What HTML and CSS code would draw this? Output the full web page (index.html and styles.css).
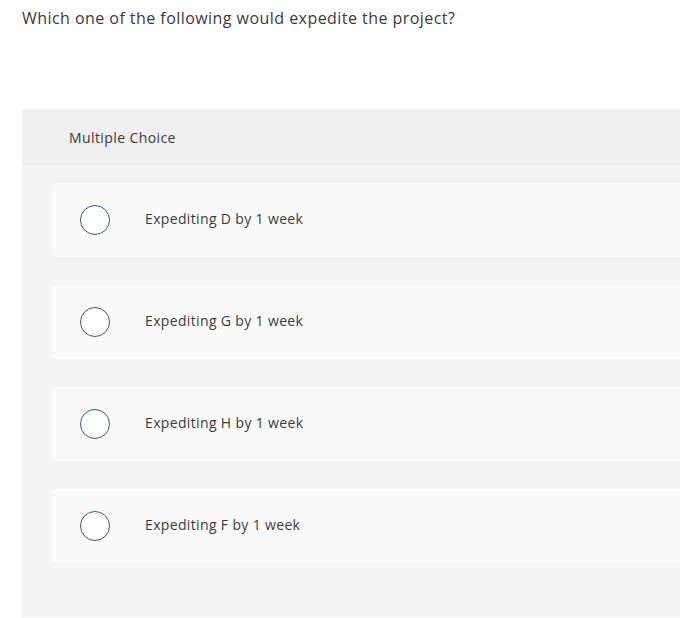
FILE: index.html
```html
<!DOCTYPE html>
<html>
<head>
<meta charset="utf-8">
<link rel="stylesheet" href="styles.css">
</head>
<body>
<div class="page">
  <p class="question">Which one of the following would expedite the project?</p>
  <div class="panel">
    <div class="panel-head">Multiple Choice</div>
    <div class="options">
      <div class="option"><span class="radio"></span><span class="label">Expediting D by 1 week</span></div>
      <div class="option"><span class="radio"></span><span class="label">Expediting G by 1 week</span></div>
      <div class="option"><span class="radio"></span><span class="label">Expediting H by 1 week</span></div>
      <div class="option"><span class="radio"></span><span class="label">Expediting F by 1 week</span></div>
    </div>
  </div>
</div>
</body>
</html>
```
FILE: styles.css
```css
html, body {
  margin: 0;
  padding: 0;
  background: #ffffff;
  overflow: hidden;
}
.page {
  padding: 8px 0 0 22px;
  font-family: "Open Sans", sans-serif;
  color: #333333;
}
.question {
  margin: 0;
  font-size: 16px;
  line-height: 20px;
  color: #3a3a3a;
  letter-spacing: 0.45px;
}
.panel {
  margin-top: 81px;
  background: #f5f5f5;
  padding-bottom: 54px;
}
.panel-head {
  height: 56px;
  background: #efefef;
  display: flex;
  align-items: center;
  padding-left: 47px;
  font-size: 14px;
  letter-spacing: 0.4px;
  color: #3a3a3a;
}
.options {
  display: flex;
  flex-direction: column;
  gap: 28px;
  padding: 18px 0 0 30px;
}
.option {
  height: 74px;
  background: #fafafa;
  border-radius: 4px 0 0 4px;
  display: flex;
  align-items: center;
  padding-left: 28px;
}
.radio {
  width: 28px;
  height: 28px;
  border: 1.5px solid #2d5d8e;
  border-radius: 50%;
  background: #fff;
  flex: none;
}
.label {
  margin-left: 35px;
  font-size: 14px;
  line-height: 18px;
  margin-top: -3px;
  letter-spacing: 0.35px;
  color: #3a3a3a;
}
```
